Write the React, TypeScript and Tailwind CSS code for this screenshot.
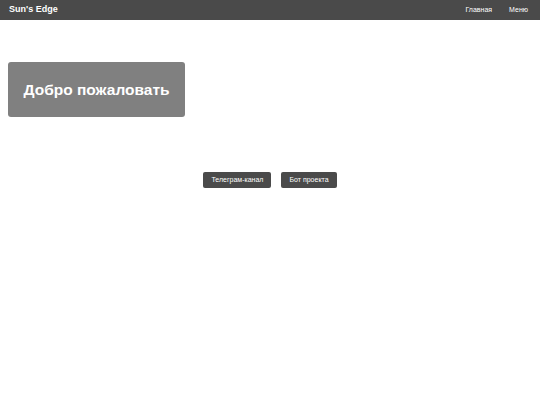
export default function App() {
  return (
    <div className="min-h-[405px] bg-white font-['Liberation_Sans',Arial,sans-serif]">
      <header className="flex h-[20px] items-center justify-between bg-[#4a4a4a] pl-[9px] pr-[12px] text-white">
        <div className="text-[9px] font-bold">Sun's Edge</div>
        <nav className="flex gap-[17px] text-[7px]">
          <a href="#">Главная</a>
          <a href="#">Меню</a>
        </nav>
      </header>

      <section className="px-[8px] pt-[42px]">
        <div className="inline-flex h-[55px] w-[177px] items-center justify-center rounded-[3px] bg-[#808080]">
          <h1 className="text-[15.5px] font-bold text-white">Добро пожаловать</h1>
        </div>
      </section>

      <div className="mt-[55px] flex justify-center gap-[10px]">
        <button className="h-[16px] rounded-[2px] bg-[#4a4a4a] px-[8px] text-[7px] text-white">
          Телеграм-канал
        </button>
        <button className="h-[16px] rounded-[2px] bg-[#4a4a4a] px-[8px] text-[7px] text-white">
          Бот проекта
        </button>
      </div>
    </div>
  );
}
